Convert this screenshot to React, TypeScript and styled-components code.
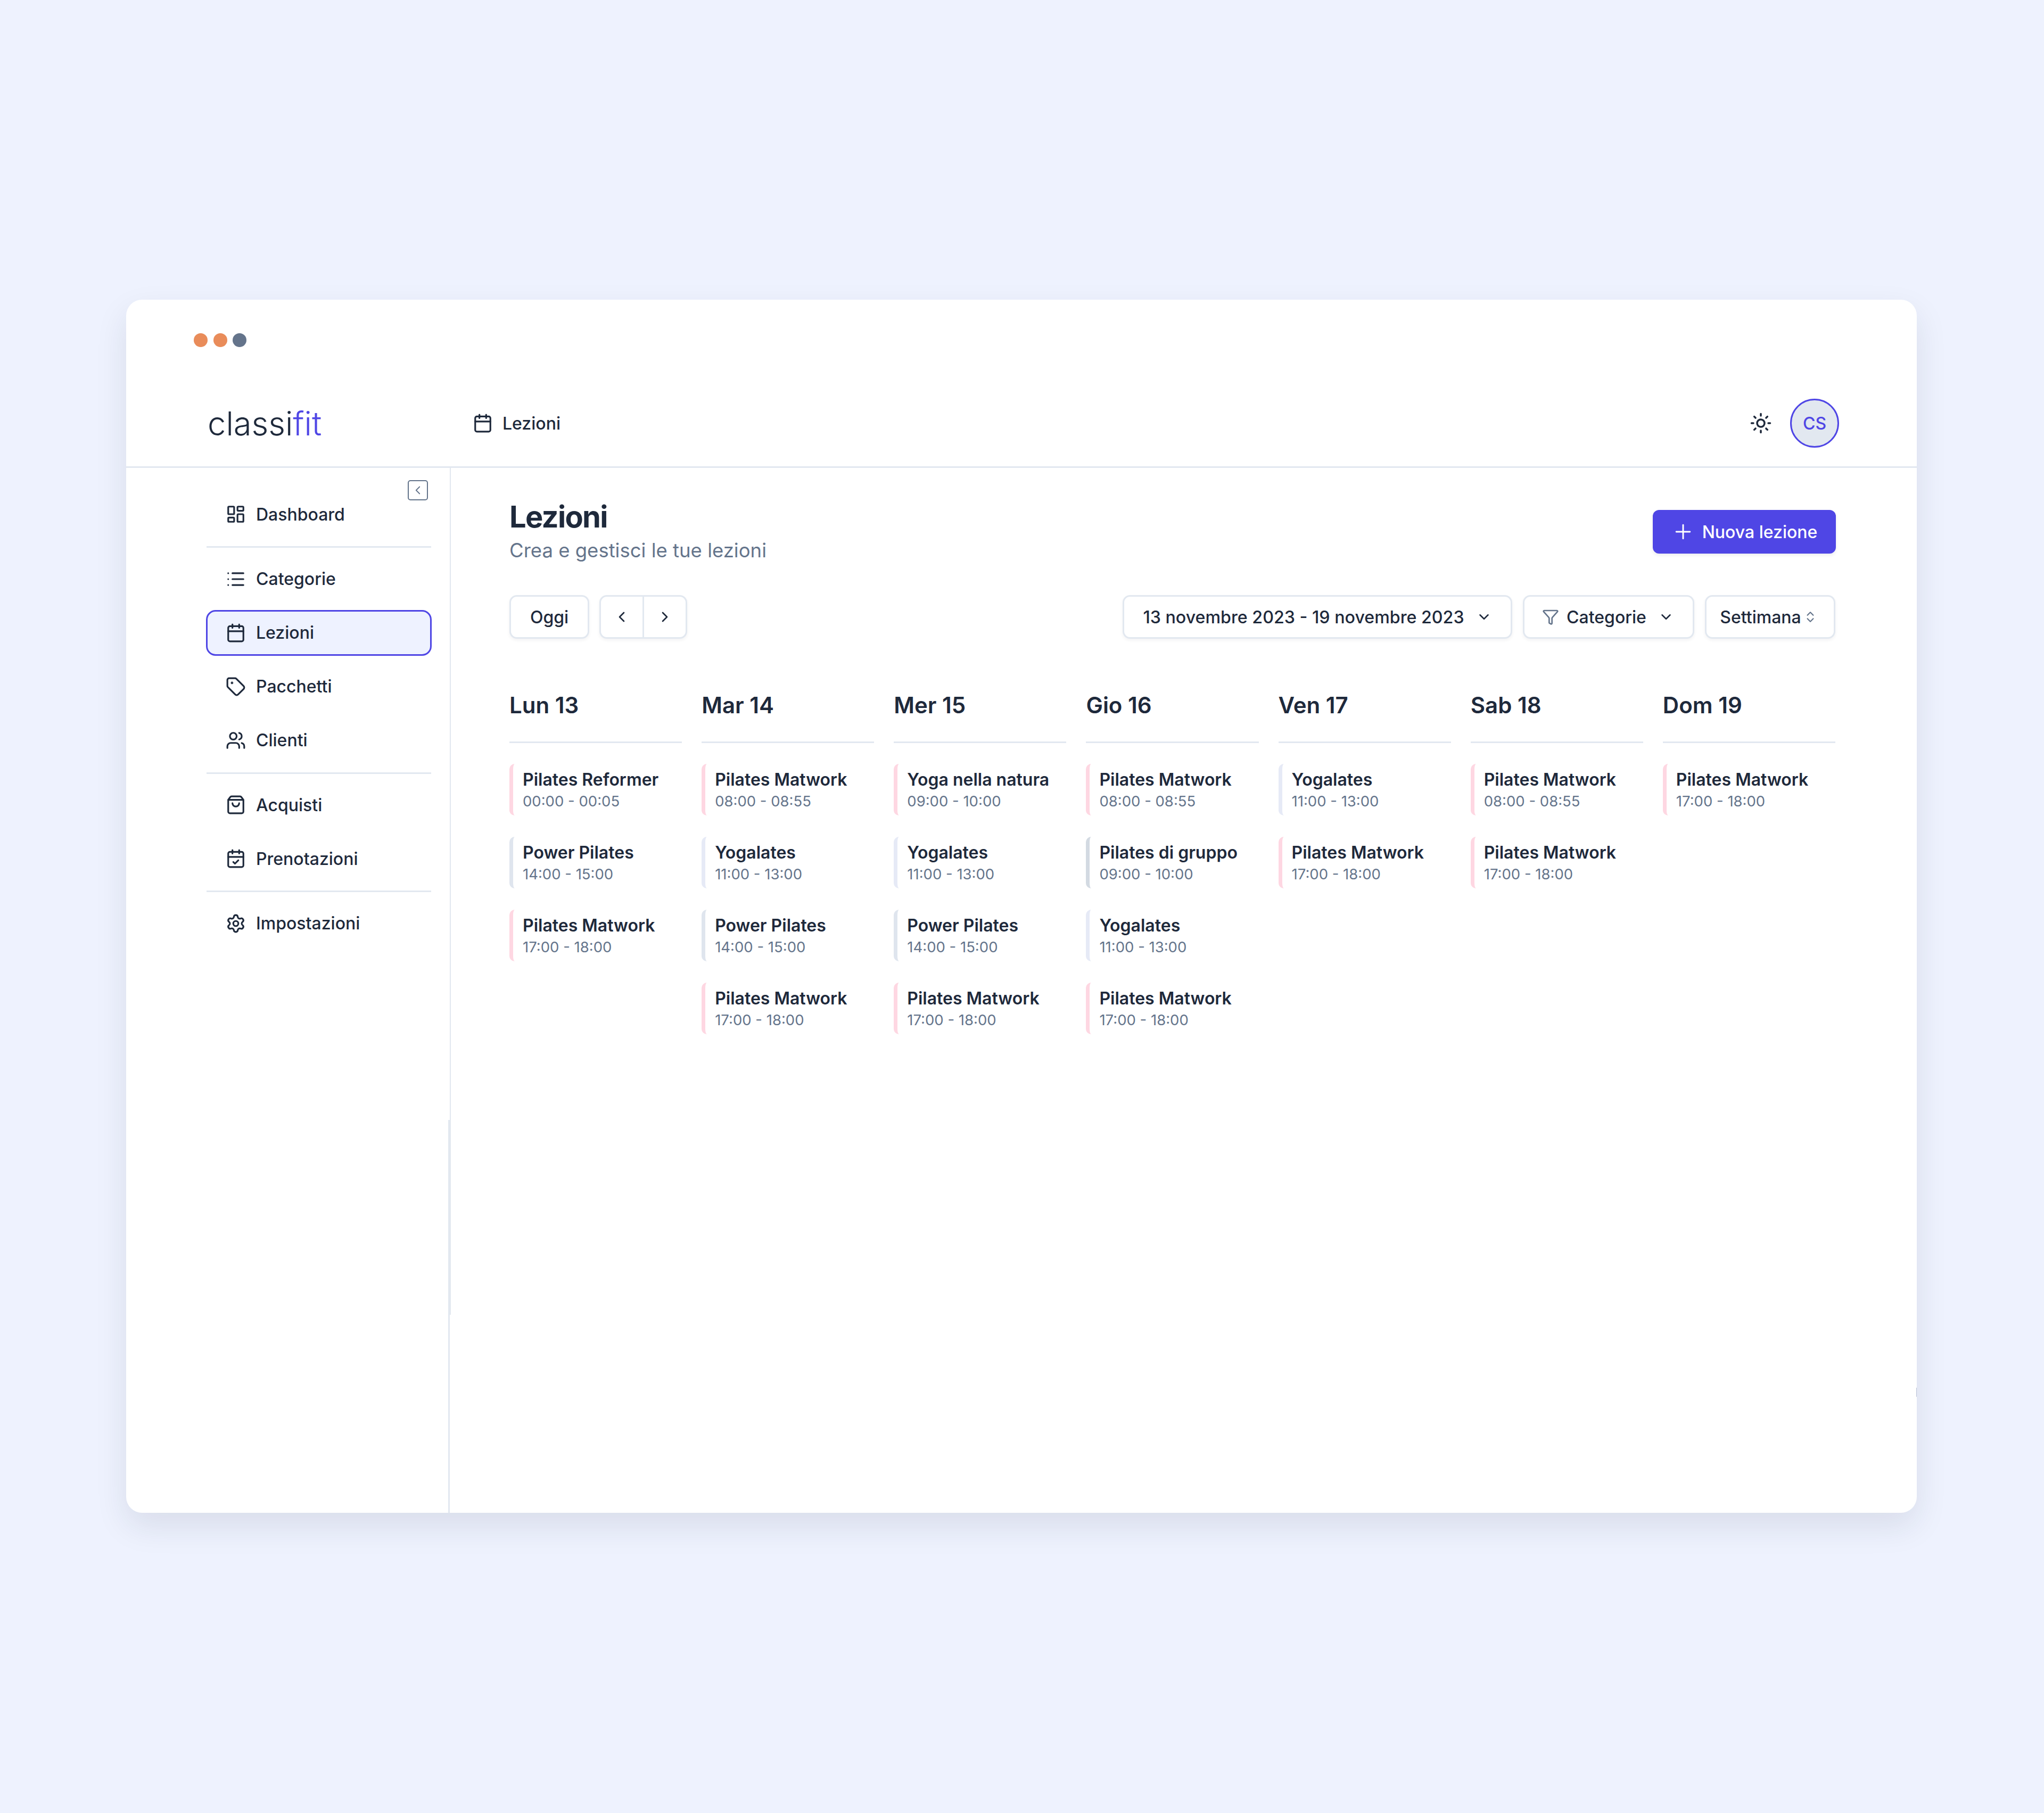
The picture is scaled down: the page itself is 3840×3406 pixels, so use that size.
import { createGlobalStyle, styled } from 'styled-components';
import {
  Calendar,
  CalendarCheck,
  ChevronDown,
  ChevronLeft,
  ChevronRight,
  ChevronsUpDown,
  Filter,
  LayoutDashboard,
  List,
  Plus,
  Settings,
  ShoppingBag,
  Sun,
  Tag,
  Users,
} from 'lucide-react';

const GlobalStyle = createGlobalStyle`
  html, body {
    margin: 0;
    background: #eef2fe;
    font-family: Inter, "Liberation Sans", sans-serif;
    color: #1e293b;
  }
  * { box-sizing: border-box; }
`;

const Page = styled.div`
  width: 3840px;
  height: 3406px;
  padding: 563px 239px 0 237px;
`;

const Win = styled.div`
  position: relative;
  height: 2279px;
  background: #fff;
  border-radius: 30px;
  box-shadow: 0 25px 60px rgba(30, 41, 59, 0.1);
  display: flex;
  flex-direction: column;
  /* stray tick on the right edge */
  &::after {
    content: '';
    position: absolute;
    right: 0;
    top: 2044px;
    width: 1px;
    height: 17px;
    background: #b9c2d6;
  }
`;

const Dots = styled.div`
  height: 151px;
  flex: none;
  padding: 63px 0 0 127px;
  display: flex;
  gap: 10.5px;
`;

const Dot = styled.span<{ $c: string }>`
  width: 26px;
  height: 26px;
  border-radius: 50%;
  background: ${p => p.$c};
`;

const TopBar = styled.header`
  height: 165px;
  flex: none;
  border-bottom: 3px solid #e2e8f0;
  display: flex;
  align-items: center;
  padding: 0 146px 0 153px;
`;

const Logo = styled.div`
  width: 498px;
  font-size: 61.5px;
  font-weight: 300;
  color: #1e293b;
  span { color: #4f46e5; }
`;

const Crumb = styled.div`
  display: flex;
  align-items: center;
  gap: 18px;
  font-size: 32px;
  font-weight: 500;
  svg { width: 38px; height: 38px; }
`;

const TopRight = styled.div`
  margin-left: auto;
  display: flex;
  align-items: center;
  gap: 34px;
  svg { width: 42px; height: 42px; }
`;

const Avatar = styled.div`
  width: 92px;
  height: 92px;
  border-radius: 50%;
  background: #e2e8f0;
  border: 3px solid #4f46e5;
  color: #4f46e5;
  font-size: 32px;
  font-weight: 500;
  display: flex;
  align-items: center;
  justify-content: center;
`;

const Body = styled.div`
  flex: 1;
  display: flex;
  min-height: 0;
`;

const Side = styled.aside`
  position: relative;
  width: 608px;
  flex: none;
  padding: 44px 35px 0 151px;
  /* lower part of the sidebar rule sits a few pixels left of the upper one */
  &::after {
    content: '';
    position: absolute;
    right: 0;
    top: 1225px;
    bottom: 0;
    width: 3px;
    background: #e2e8f0;
  }
`;

const Collapse = styled.button`
  position: absolute;
  top: 23px;
  right: 41px;
  width: 38px;
  height: 38px;
  padding: 0;
  background: #fff;
  border: 2.5px solid #64748b;
  border-radius: 5px;
  color: #64748b;
  display: flex;
  align-items: center;
  justify-content: center;
  svg { width: 26px; height: 26px; stroke-width: 1.7; }
`;

const Group = styled.nav`
  display: flex;
  flex-direction: column;
  gap: 15px;
  padding: 15.5px 0 17px;
  &:first-of-type { padding-top: 0; }
  & + & { border-top: 3px solid #e2e8f0; }
`;

const Item = styled.a<{ $active?: boolean }>`
  height: 86px;
  display: flex;
  align-items: center;
  gap: 19px;
  margin: 0 -1px;
  padding-left: 34px;
  font-size: 32px;
  font-weight: 500;
  border-radius: 18px;
  border: 3px solid ${p => (p.$active ? '#4f46e5' : 'transparent')};
  background: ${p => (p.$active ? '#eef2ff' : 'transparent')};
  svg { width: 38px; height: 38px; flex: none; }
`;

const Main = styled.main`
  position: relative;
  flex: 1;
  min-width: 0;
  padding: 55px 153px 0 112px;
  &::before {
    content: '';
    position: absolute;
    left: 0;
    top: 0;
    height: 1591px;
    width: 2px;
    background: #e2e8f0;
  }
`;

const TitleRow = styled.div`
  display: flex;
  justify-content: space-between;
  align-items: flex-start;
`;

const Title = styled.h1`
  margin: 0;
  font-size: 56px;
  line-height: 74px;
  font-weight: 700;
  letter-spacing: -0.03em;
`;

const Sub = styled.p`
  margin: 0;
  font-size: 36.5px;
  line-height: 52px;
  color: #64748b;
`;

const Primary = styled.button`
  margin-top: 24px;
  margin-right: -1px;
  width: 344px;
  height: 82px;
  border: 0;
  border-radius: 12px;
  background: #4f46e5;
  color: #fff;
  font: 500 32px Inter, sans-serif;
  display: flex;
  align-items: center;
  justify-content: center;
  gap: 14px;
  box-shadow: 0 3px 6px rgba(15, 23, 42, 0.08);
  svg { width: 44px; height: 44px; stroke-width: 1.6; }
`;

const Toolbar = styled.div`
  display: flex;
  align-items: center;
  gap: 20px;
  margin-top: 58px;
`;

const Outline = styled.button<{ $w: number; $trail?: number }>`
  width: ${p => p.$w}px;
  height: 82px;
  flex: none;
  background: #fff;
  border: 3px solid #e2e8f0;
  border-radius: 14px;
  box-shadow: 0 3px 6px rgba(15, 23, 42, 0.05);
  color: #1e293b;
  font: 500 32px Inter, sans-serif;
  display: flex;
  align-items: center;
  justify-content: center;
  gap: 4px;
  padding: 0 ${p => p.$trail ?? 0}px 0 0;
`;

const DateButton = styled(Outline)`
  font-size: 32.2px;
`;

const DownIcon = styled(ChevronDown)`
  width: 30px;
  height: 30px;
  margin-left: 18px;
`;

const FunnelIcon = styled(Filter)`
  width: 32px;
  height: 32px;
  margin-right: 10px;
  color: #64748b;
`;

const SortIcon = styled(ChevronsUpDown)`
  width: 26px;
  height: 26px;
  color: #64748b;
`;

const Chevrons = styled.div`
  display: flex;
  width: 165px;
  height: 82px;
  margin-left: -1px;
  background: #fff;
  border: 3px solid #e2e8f0;
  border-radius: 14px;
  box-shadow: 0 3px 6px rgba(15, 23, 42, 0.05);
  & > span {
    flex: 1;
    display: flex;
    align-items: center;
    justify-content: center;
  }
  & > span + span { border-left: 3px solid #e2e8f0; }
  svg { width: 32px; height: 32px; }
`;

const Spacer = styled.div`
  flex: 1;
`;

const Days = styled.div`
  display: grid;
  grid-template-columns: repeat(7, 1fr);
  column-gap: 37px;
  margin-top: 84px;
`;

const DayHead = styled.h2`
  margin: 0 0 39px;
  height: 112px;
  padding-top: 15px;
  font-size: 42px;
  line-height: 52px;
  font-weight: 600;
  border-bottom: 3px solid #e2e8f0;
`;

const Events = styled.div`
  display: flex;
  flex-direction: column;
  gap: 40px;
`;

const Lesson = styled.div<{ $bar: string }>`
  height: 97px;
  border-left: 7px solid ${p => p.$bar};
  border-radius: 10px 0 0 10px;
  padding: 8px 0 0 18px;
`;

const LessonName = styled.div`
  font-size: 32px;
  line-height: 44px;
  font-weight: 600;
  white-space: nowrap;
`;

const LessonTime = styled.div`
  font-size: 27.5px;
  line-height: 36px;
  color: #64748b;
  white-space: nowrap;
`;

const PINK = '#fed7e2';
const SLATE = '#dfe5ee';
const LIGHT = '#e6eaf6';
const DARK = '#d3dae2';

type Ev = [string, string, string];

const days: { label: string; events: Ev[] }[] = [
  { label: 'Lun 13', events: [
    ['Pilates Reformer', '00:00 - 00:05', PINK],
    ['Power Pilates', '14:00 - 15:00', SLATE],
    ['Pilates Matwork', '17:00 - 18:00', PINK],
  ] },
  { label: 'Mar 14', events: [
    ['Pilates Matwork', '08:00 - 08:55', PINK],
    ['Yogalates', '11:00 - 13:00', LIGHT],
    ['Power Pilates', '14:00 - 15:00', SLATE],
    ['Pilates Matwork', '17:00 - 18:00', PINK],
  ] },
  { label: 'Mer 15', events: [
    ['Yoga nella natura', '09:00 - 10:00', PINK],
    ['Yogalates', '11:00 - 13:00', LIGHT],
    ['Power Pilates', '14:00 - 15:00', SLATE],
    ['Pilates Matwork', '17:00 - 18:00', PINK],
  ] },
  { label: 'Gio 16', events: [
    ['Pilates Matwork', '08:00 - 08:55', PINK],
    ['Pilates di gruppo', '09:00 - 10:00', DARK],
    ['Yogalates', '11:00 - 13:00', LIGHT],
    ['Pilates Matwork', '17:00 - 18:00', PINK],
  ] },
  { label: 'Ven 17', events: [
    ['Yogalates', '11:00 - 13:00', LIGHT],
    ['Pilates Matwork', '17:00 - 18:00', PINK],
  ] },
  { label: 'Sab 18', events: [
    ['Pilates Matwork', '08:00 - 08:55', PINK],
    ['Pilates Matwork', '17:00 - 18:00', PINK],
  ] },
  { label: 'Dom 19', events: [
    ['Pilates Matwork', '17:00 - 18:00', PINK],
  ] },
];

export default function App() {
  return (
    <Page>
      <GlobalStyle />
      <Win>
        <Dots>
          <Dot $c="#e98c5a" />
          <Dot $c="#e98c5a" />
          <Dot $c="#64748b" />
        </Dots>
        <TopBar>
          <Logo>classi<span>fit</span></Logo>
          <Crumb><Calendar />Lezioni</Crumb>
          <TopRight>
            <Sun />
            <Avatar>CS</Avatar>
          </TopRight>
        </TopBar>
        <Body>
          <Side>
            <Collapse><ChevronLeft /></Collapse>
            <Group>
              <Item><LayoutDashboard />Dashboard</Item>
            </Group>
            <Group>
              <Item><List />Categorie</Item>
              <Item $active><Calendar />Lezioni</Item>
              <Item><Tag />Pacchetti</Item>
              <Item><Users />Clienti</Item>
            </Group>
            <Group>
              <Item><ShoppingBag />Acquisti</Item>
              <Item><CalendarCheck />Prenotazioni</Item>
            </Group>
            <Group>
              <Item><Settings />Impostazioni</Item>
            </Group>
          </Side>
          <Main>
            <TitleRow>
              <div>
                <Title>Lezioni</Title>
                <Sub>Crea e gestisci le tue lezioni</Sub>
              </div>
              <Primary><Plus />Nuova lezione</Primary>
            </TitleRow>
            <Toolbar>
              <Outline $w={150}>Oggi</Outline>
              <Chevrons>
                <span><ChevronLeft /></span>
                <span><ChevronRight /></span>
              </Chevrons>
              <Spacer />
              <DateButton $w={732}>
                13 novembre 2023 - 19 novembre 2023
                <DownIcon />
              </DateButton>
              <Outline $w={322} $trail={2}>
                <FunnelIcon />
                Categorie
                <DownIcon />
              </Outline>
              <Outline $w={245} $trail={6}>
                Settimana
                <SortIcon />
              </Outline>
            </Toolbar>
            <Days>
              {days.map(day => (
                <div key={day.label}>
                  <DayHead>{day.label}</DayHead>
                  <Events>
                    {day.events.map(([name, time, bar]) => (
                      <Lesson key={name + time} $bar={bar}>
                        <LessonName>{name}</LessonName>
                        <LessonTime>{time}</LessonTime>
                      </Lesson>
                    ))}
                  </Events>
                </div>
              ))}
            </Days>
          </Main>
        </Body>
      </Win>
    </Page>
  );
}
